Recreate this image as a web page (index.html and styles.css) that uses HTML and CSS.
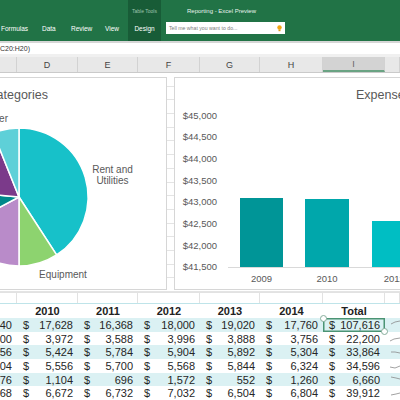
FILE: index.html
```html
<!DOCTYPE html>
<html lang="en">
<head>
    <meta charset="UTF-8">
    <meta name="viewport" content="width=device-width, initial-scale=1.0">
    <title>Reporting - Excel Preview</title>
    <link rel="stylesheet" href="styles.css">
</head>
<body>
    <div class="ribbon">
        <div class="tabs">
            <span class="tab tab-formulas">Formulas</span>
            <span class="tab tab-data">Data</span>
            <span class="tab tab-review">Review</span>
            <span class="tab tab-view">View</span>
        </div>
        <div class="context">
            <span class="context-title">Table Tools</span>
            <span class="context-tab">Design</span>
        </div>
        <div class="head">
            <div class="doc-title">Reporting - Excel Preview</div>
            <div class="search">
                <span>Tell me what you want to do...</span>
                <svg class="bulb" width="5" height="7" viewBox="0 0 5 7">
                    <circle cx="2.5" cy="2.4" r="2.2" fill="#f3a512"/>
                    <rect x="1.5" y="4.4" width="2" height="1.8" fill="#e09a10"/>
                </svg>
            </div>
        </div>
    </div>

    <div class="formula-bar">C20:H20)</div>

    <div class="col-head">
        <div class="ch"></div>
        <div class="ch">D</div>
        <div class="ch">E</div>
        <div class="ch">F</div>
        <div class="ch">G</div>
        <div class="ch">H</div>
        <div class="ch sel">I</div>
        <div class="ch"></div>
    </div>

    <div class="charts">
        <div class="panel pie-panel">
            <svg width="166" height="211" viewBox="0 78 166 211">
                <text class="chart-title" x="48" y="98.5" text-anchor="end">Expense Categories</text>
                <g stroke="#fff" stroke-width="1.5" stroke-linejoin="round">
                    <path d="M19,197 L19,128 A69,69 0 0 1 56.6,254.9 Z" fill="#17c1c9"/>
                    <path d="M19,197 L56.6,254.9 A69,69 0 0 1 19,266 Z" fill="#8dd36f"/>
                    <path d="M19,197 L19,266 A69,69 0 0 1 -41.9,229.4 Z" fill="#b98bc9"/>
                    <path d="M19,197 L-41.9,229.4 A69,69 0 0 1 -49.7,191 Z" fill="#00878b"/>
                    <path d="M19,197 L-49.7,191 A69,69 0 0 1 -6.8,133 Z" fill="#7b3a8a"/>
                    <path d="M19,197 L-6.8,133 A69,69 0 0 1 19,128 Z" fill="#5ed0d8"/>
                </g>
                <text class="label" x="8" y="122" text-anchor="end">Other</text>
                <text class="label" x="112.5" y="172.5" text-anchor="middle">Rent and</text>
                <text class="label" x="112.5" y="184" text-anchor="middle">Utilities</text>
                <text class="label" x="63" y="277.5" text-anchor="middle">Equipment</text>
            </svg>
        </div>
        <div class="panel bar-panel">
            <svg width="238" height="211" viewBox="175 78 238 211">
                <text class="chart-title" x="356" y="98.5">Expenses by Year</text>
                <g class="axis" text-anchor="end">
                    <text x="217" y="118.5">$45,000</text>
                    <text x="217" y="140.2">$44,500</text>
                    <text x="217" y="161.9">$44,000</text>
                    <text x="217" y="183.6">$43,500</text>
                    <text x="217" y="205.3">$43,000</text>
                    <text x="217" y="227">$42,500</text>
                    <text x="217" y="248.7">$42,000</text>
                    <text x="217" y="270.4">$41,500</text>
                </g>
                <rect x="240" y="198" width="43" height="69" fill="#009597"/>
                <rect x="305" y="199" width="44" height="68" fill="#00a7ab"/>
                <rect x="372" y="221" width="44" height="46" fill="#00bec3"/>
                <line x1="228" y1="267.5" x2="413" y2="267.5" stroke="#d9d9d9" stroke-width="1"/>
                <g class="axis" text-anchor="middle">
                    <text x="261.5" y="281.5">2009</text>
                    <text x="327" y="281.5">2010</text>
                    <text x="394" y="281.5">2011</text>
                </g>
            </svg>
        </div>
    </div>

    <div class="cols blank">
        <div></div><div></div><div></div><div></div><div></div><div></div><div></div><div></div>
    </div>

    <div class="cols thead">
        <div></div>
        <div>2010</div>
        <div>2011</div>
        <div>2012</div>
        <div>2013</div>
        <div>2014</div>
        <div>Total</div>
        <div></div>
    </div>

    <div class="cols row band">
        <div class="cell"><span>40</span></div>
        <div class="cell"><span>$</span><span>17,628</span></div>
        <div class="cell"><span>$</span><span>16,368</span></div>
        <div class="cell"><span>$</span><span>18,000</span></div>
        <div class="cell"><span>$</span><span>19,020</span></div>
        <div class="cell"><span>$</span><span>17,760</span></div>
        <div class="cell active"><span>$</span><span>107,616</span></div>
        <div class="spark"><svg width="15" height="13"><polyline points="6,6 10,4 15,3" /></svg></div>
    </div>
    <div class="cols row">
        <div class="cell"><span>00</span></div>
        <div class="cell"><span>$</span><span>3,972</span></div>
        <div class="cell"><span>$</span><span>3,588</span></div>
        <div class="cell"><span>$</span><span>3,996</span></div>
        <div class="cell"><span>$</span><span>3,888</span></div>
        <div class="cell"><span>$</span><span>3,756</span></div>
        <div class="cell"><span>$</span><span>22,200</span></div>
        <div class="spark"><svg width="15" height="13"><polyline points="5,9 9,7 15,6" /></svg></div>
    </div>
    <div class="cols row band">
        <div class="cell"><span>56</span></div>
        <div class="cell"><span>$</span><span>5,424</span></div>
        <div class="cell"><span>$</span><span>5,784</span></div>
        <div class="cell"><span>$</span><span>5,904</span></div>
        <div class="cell"><span>$</span><span>5,892</span></div>
        <div class="cell"><span>$</span><span>5,304</span></div>
        <div class="cell"><span>$</span><span>33,864</span></div>
        <div class="spark"><svg width="15" height="13"><polyline points="6,6 10,6 15,7" /></svg></div>
    </div>
    <div class="cols row">
        <div class="cell"><span>04</span></div>
        <div class="cell"><span>$</span><span>5,556</span></div>
        <div class="cell"><span>$</span><span>5,700</span></div>
        <div class="cell"><span>$</span><span>5,568</span></div>
        <div class="cell"><span>$</span><span>5,844</span></div>
        <div class="cell"><span>$</span><span>6,324</span></div>
        <div class="cell"><span>$</span><span>34,596</span></div>
        <div class="spark"><svg width="15" height="13"><polyline points="5,8 10,9 15,7" /></svg></div>
    </div>
    <div class="cols row band">
        <div class="cell"><span>76</span></div>
        <div class="cell"><span>$</span><span>1,104</span></div>
        <div class="cell"><span>$</span><span>696</span></div>
        <div class="cell"><span>$</span><span>1,572</span></div>
        <div class="cell"><span>$</span><span>552</span></div>
        <div class="cell"><span>$</span><span>1,260</span></div>
        <div class="cell"><span>$</span><span>6,660</span></div>
        <div class="spark"><svg width="15" height="13"><polyline points="6,4 11,5 15,6" /></svg></div>
    </div>
    <div class="cols row">
        <div class="cell"><span>68</span></div>
        <div class="cell"><span>$</span><span>6,672</span></div>
        <div class="cell"><span>$</span><span>6,732</span></div>
        <div class="cell"><span>$</span><span>7,032</span></div>
        <div class="cell"><span>$</span><span>6,504</span></div>
        <div class="cell"><span>$</span><span>6,804</span></div>
        <div class="cell"><span>$</span><span>39,912</span></div>
        <div class="spark"><svg width="15" height="13"><polyline points="6,8 11,7 15,6" /></svg></div>
    </div>
</body>
</html>
```

FILE: styles.css
```css
body {
    margin: 0;
    width: 400px;
    height: 400px;
    overflow: hidden;
    font-family: "Liberation Sans", Arial, sans-serif;
    background-color: #fff;
}

/* ribbon */
.ribbon {
    height: 41px;
    background-color: #217346;
    color: #fff;
    display: flex;
}
.tabs {
    display: flex;
    align-items: flex-end;
    padding-bottom: 8px;
    font-size: 6.5px;
    line-height: 8px;
}
.tab {
    flex-shrink: 0;
}
.tab-formulas { width: 41px; padding-left: 1px; }
.tab-data { width: 29px; }
.tab-review { width: 34px; }
.tab-view { width: 23px; }
.context {
    width: 33px;
    background-color: #185c37;
    display: flex;
    flex-direction: column;
    align-items: center;
    justify-content: space-between;
    padding: 8px 0;
    box-sizing: border-box;
}
.context-title {
    font-size: 5px;
    line-height: 7px;
    color: #9fc4ae;
}
.context-tab {
    font-size: 6.5px;
    line-height: 8px;
}
.head {
    margin-left: 5px;
    display: flex;
    flex-direction: column;
}
.doc-title {
    margin: 8px 0 0 21px;
    font-size: 6px;
    line-height: 7px;
    color: #e9f2ec;
}
.search {
    margin-top: 7px;
    width: 119px;
    height: 12px;
    background-color: #fff;
    color: #7a7a7a;
    font-size: 5.2px;
    display: flex;
    align-items: center;
    justify-content: space-between;
    padding: 0 3px 0 3px;
    box-sizing: border-box;
}

/* formula bar + column letters */
.formula-bar {
    border-top: 2px solid #d6d6d6;
    border-bottom: 3px solid #f0f0f0;
    height: 11px;
    line-height: 11px;
    font-size: 7px;
    color: #333;
}
.col-head {
    display: flex;
    height: 16px;
    background-color: #e8e8e8;
    border-bottom: 1px solid #cacaca;
    box-sizing: border-box;
    font-size: 9px;
    color: #444;
}
.col-head > div,
.cols > div {
    flex-shrink: 0;
    box-sizing: border-box;
}
.col-head > :nth-child(1), .cols > :nth-child(1) { width: 17px; }
.col-head > :nth-child(2), .cols > :nth-child(2) { width: 61px; }
.col-head > :nth-child(3), .cols > :nth-child(3) { width: 60px; }
.col-head > :nth-child(4), .cols > :nth-child(4) { width: 62px; }
.col-head > :nth-child(5), .cols > :nth-child(5) { width: 60px; }
.col-head > :nth-child(6), .cols > :nth-child(6) { width: 63px; }
.col-head > :nth-child(7), .cols > :nth-child(7) { width: 62px; }
.col-head > :nth-child(8), .cols > :nth-child(8) { width: 15px; }
.ch {
    display: flex;
    align-items: center;
    justify-content: center;
    border-right: 1px solid #d2d2d2;
}
.ch.sel {
    background-color: #d3d3d3;
    border-bottom: 2px solid #6aa383;
    color: #666;
}

/* charts over the sheet */
.charts {
    height: 219px;
    display: flex;
    gap: 7px;
    padding-top: 4px;
    box-sizing: border-box;
    background: repeating-linear-gradient(to bottom, #fff 0, #fff 12.7px, #e4e4e4 12.7px, #e4e4e4 13.7px);
}
.panel {
    flex-shrink: 0;
    height: 213px;
    background-color: #fff;
    border: 1px solid #d6d6d6;
    box-sizing: border-box;
}
.panel svg {
    display: block;
}
.pie-panel {
    width: 167px;
    border-left: none;
}
.bar-panel {
    width: 240px;
    border-right: none;
}
.chart-title {
    font-size: 12.5px;
    fill: #595959;
}
.label {
    font-size: 10px;
    fill: #595959;
}
.axis {
    font-size: 9.5px;
    fill: #595959;
}

/* table */
.cols {
    display: flex;
}
.blank {
    height: 11px;
    border-top: 1px solid #e2e2e2;
    box-sizing: border-box;
}
.blank > div {
    border-right: 1px solid #e2e2e2;
}
.thead {
    height: 15px;
    border-top: 1px solid #bfe4e9;
    box-sizing: border-box;
    font-size: 11px;
    font-weight: bold;
    color: #222;
    align-items: center;
}
.thead > div {
    text-align: center;
}
.row {
    height: 13.7px;
    font-size: 11px;
    color: #262626;
}
.band {
    background-color: #dbf1f3;
}
.cell {
    display: flex;
    justify-content: space-between;
    align-items: center;
    padding: 0 5px 0 6px;
}
.cols > .cell:first-child {
    justify-content: flex-end;
}
.cell.active {
    position: relative;
    box-shadow: inset 0 0 0 1.5px #4b9474;
}
.cell.active::before,
.cell.active::after {
    content: "";
    position: absolute;
    width: 5px;
    height: 5px;
    border-radius: 50%;
    background-color: #fff;
    border: 1px solid #86ad9b;
}
.cell.active::before {
    left: -3px;
    top: -3px;
}
.cell.active::after {
    right: -3px;
    bottom: -3px;
}
.spark {
    display: flex;
    align-items: center;
}
.spark svg {
    display: block;
}
.spark polyline {
    fill: none;
    stroke: #8a8a8a;
    stroke-width: 0.8;
}
```
